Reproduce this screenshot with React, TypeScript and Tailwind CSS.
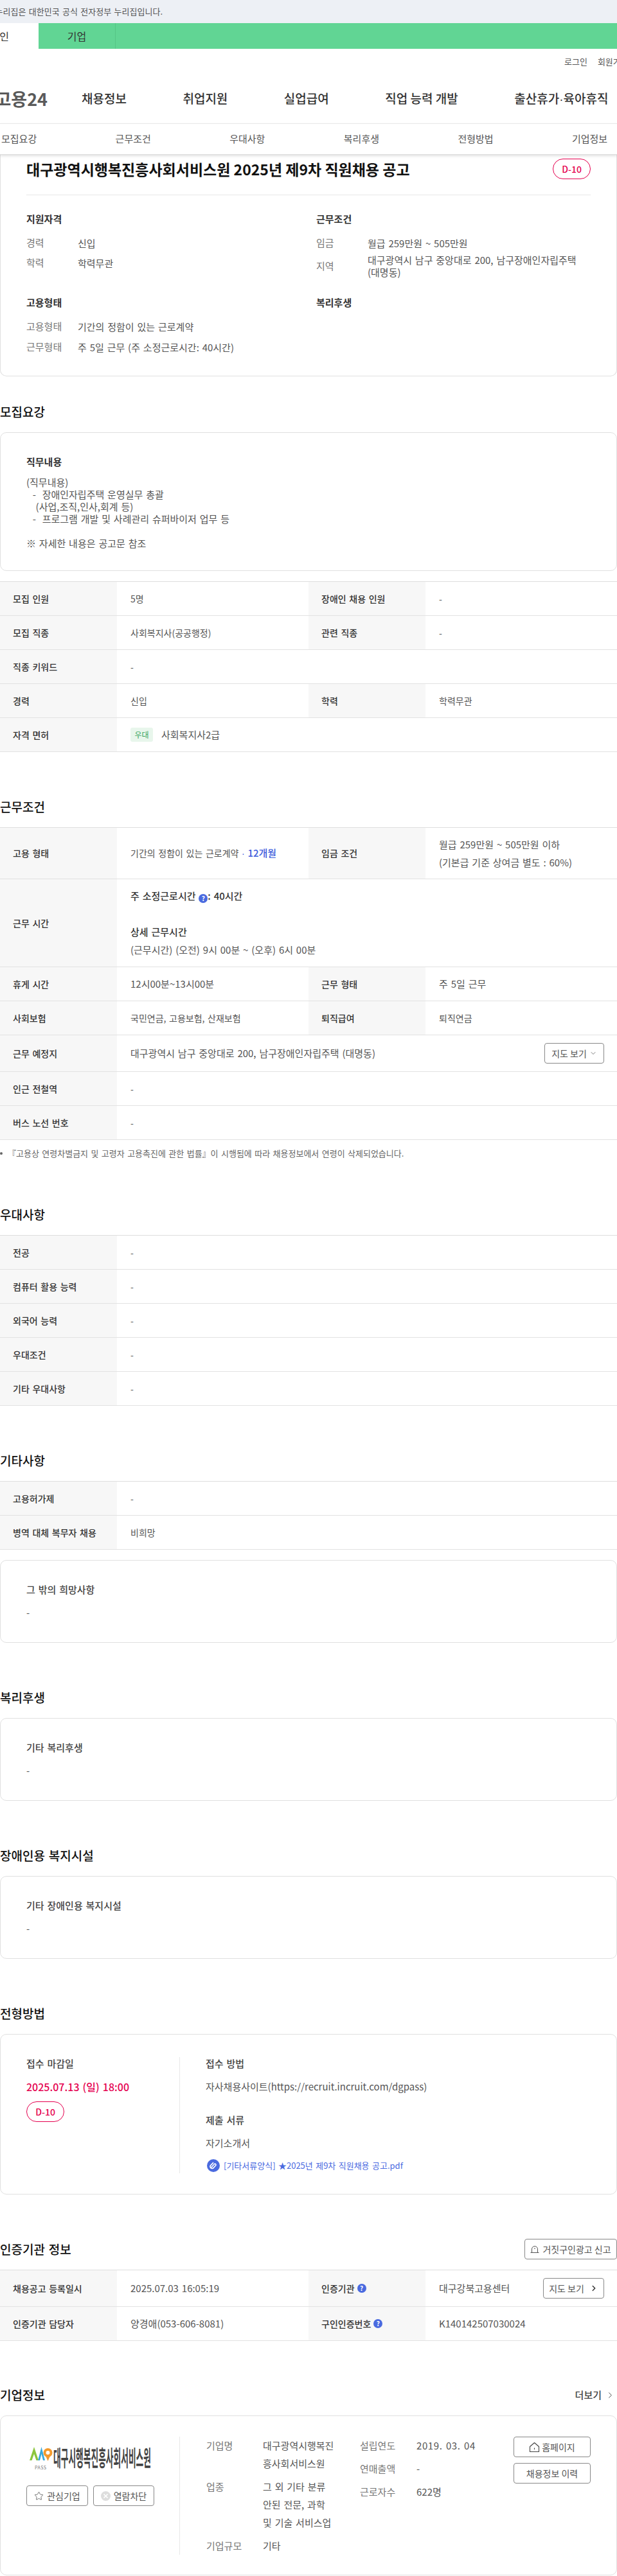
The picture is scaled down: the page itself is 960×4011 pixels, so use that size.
import type { ReactNode } from 'react';
import { ChevronDown, ChevronRight, Star } from 'lucide-react';

function Help() {
  return (
    <span className="inline-flex h-[14px] w-[14px] items-center justify-center rounded-full bg-[#4a6adf] align-[-2px] text-[10px] leading-none font-bold text-white">
      ?
    </span>
  );
}

function DayBadge() {
  return (
    <div className="flex h-[32px] w-[59px] shrink-0 items-center justify-center rounded-full border border-[#e5004f] text-[14px] font-medium text-[#e5004f]">
      D-10
    </div>
  );
}

function SectionTitle({ children, className = 'mt-[71px]' }: { children: ReactNode; className?: string }) {
  return <h2 className={`${className} mb-[18px] h-[28px] text-[19px] leading-[28px] font-medium text-[#111]`}>{children}</h2>;
}

function Cell({ label, children, wide, h }: { label: ReactNode; children: ReactNode; wide?: boolean; h?: string }) {
  return (
    <div className={`flex ${wide ? 'w-[960px]' : 'w-[480px]'} ${h ?? ''}`}>
      <div className="flex w-[182px] shrink-0 items-center bg-[#f7f7f7] pl-5 font-medium text-[#333]">{label}</div>
      <div className="flex min-w-0 flex-1 items-center pl-[21px] text-[#555]">{children}</div>
    </div>
  );
}

function Row({ children, h = 'h-[53px]' }: { children: ReactNode; h?: string }) {
  return <div className={`flex border-b border-[#e2e2e2] text-[14px] ${h}`}>{children}</div>;
}

function Table({ children }: { children: ReactNode }) {
  return <div className="border-t border-[#dedede]">{children}</div>;
}

function Card({ children, className = '' }: { children: ReactNode; className?: string }) {
  return <div className={`rounded-[10px] border border-[#e0e0e0] px-10 ${className}`}>{children}</div>;
}

function SmallCard({ label }: { label: string }) {
  return (
    <Card className="h-[129px] pt-[35px]">
      <div className="text-[15px] leading-[20px] font-medium text-[#444]">{label}</div>
      <div className="mt-[16px] text-[15px] leading-[20px] text-[#555]">-</div>
    </Card>
  );
}

function Info({ label, children, className = '' }: { label: string; children: ReactNode; className?: string }) {
  return (
    <div className={`flex items-center text-[15px] ${className}`}>
      <div className="w-[80px] shrink-0 leading-[20px] text-[#777]">{label}</div>
      <div className="leading-[19px] text-[#555]">{children}</div>
    </div>
  );
}

function CompanyRow({ label, children }: { label: string; children: ReactNode }) {
  return (
    <div className="flex text-[15px] leading-[28px]">
      <div className="w-[88px] shrink-0 text-[#777]">{label}</div>
      <div className="whitespace-pre-line text-[#555]">{children}</div>
    </div>
  );
}

function OutlineButton({ children, className = '' }: { children: ReactNode; className?: string }) {
  return (
    <button className={`flex h-[32px] items-center justify-center rounded-[4px] border border-[#888] text-[14px] text-[#555] ${className}`}>
      {children}
    </button>
  );
}

function Dot() {
  return <span className="font-['Liberation_Sans',sans-serif]">·</span>;
}

function Logo() {
  return (
    <svg width="190" height="42" viewBox="0 0 190 42" className="ml-[5px] block">
      <path d="M0 24 L7 3 L14 24 L10.5 24 L7 14 L3.5 24 Z" fill="#8cc63f" />
      <path d="M13 24 L18.5 3 L24 24 L21 24 L18.5 14 L16 24 Z" fill="#39a9dc" />
      <circle cx="28.5" cy="12" r="5" fill="none" stroke="#f39a2d" strokeWidth="4" />
      <path d="M25 17 L28.5 25 L32 17 Z" fill="#f39a2d" />
      <text x="8" y="38" fontSize="7" fill="#777" textLength="18" lengthAdjust="spacing">PASS</text>
      <text x="37" y="33" fontSize="34" fontWeight="700" fill="#444" textLength="152" lengthAdjust="spacingAndGlyphs">대구시행복진흥사회서비스원</text>
    </svg>
  );
}

export default function App() {
  return (
    <div className="h-[4011px] w-[960px] overflow-hidden bg-white font-['Noto_Sans_CJK_KR','Noto_Sans',sans-serif] text-[#333] [word-spacing:1.5px]">
      {/* 상단 배너 */}
      <div className="flex h-[36px] items-center bg-[#edf0f5]">
        <div className="flex w-[253px] justify-end text-[13px] whitespace-nowrap text-[#555]">이 누리집은 대한민국 공식 전자정부 누리집입니다.</div>
      </div>

      <div className="flex h-[40px] items-center bg-[#61d594] text-[16px] text-[#333]">
        <div className="flex h-full w-[60px] items-center justify-end bg-white pr-[46px] whitespace-nowrap">개인</div>
        <div className="flex h-full w-[120px] items-center justify-center border-r border-[#56c586]">기업</div>
      </div>

      <div className="flex h-[40px] items-center gap-4 pl-[878px] text-[13px] whitespace-nowrap text-[#555]">
        <span>로그인</span>
        <span>회원가입</span>
      </div>

      {/* 메인 메뉴 */}
      <div className="flex h-[76px] items-center whitespace-nowrap">
        <div className="flex w-[74px] shrink-0 justify-end text-[27px] font-bold text-[#5a5a5a]">고용24</div>
        <nav className="ml-[53px] flex gap-[87.5px] text-[19px] font-medium text-[#333] [word-spacing:0]">
          <span>채용정보</span>
          <span>취업지원</span>
          <span>실업급여</span>
          <span>직업 능력 개발</span>
          <span>
            출산휴가
            <Dot />
            육아휴직
          </span>
        </nav>
      </div>

      <div className="relative z-10 flex h-[49px] items-center gap-[122.4px] border-t border-b border-t-[#e8e8e8] border-b-[#ddd] bg-white pl-[2px] text-[15px] text-[#555] shadow-[0_2px_4px_rgba(0,0,0,0.12)]">
        <span>모집요강</span>
        <span>근무조건</span>
        <span>우대사항</span>
        <span>복리후생</span>
        <span>전형방법</span>
        <span>기업정보</span>
      </div>

      {/* 공고 요약 */}
      <div className="h-[345px] rounded-b-[10px] border border-t-0 border-[#e0e0e0] px-10 pt-[6px]">
        <div className="flex h-[57px] items-start justify-between border-b border-[#e8e8e8]">
          <h1 className="text-[23px] leading-[32px] font-semibold text-[#111] [word-spacing:0]">대구광역시행복진흥사회서비스원 2025년 제9차 직원채용 공고</h1>
          <DayBadge />
        </div>
        <div className="mt-[27px] grid grid-cols-[451px_1fr] gap-y-[28px]">
          <div>
            <h3 className="text-[15px] leading-[20px] font-semibold text-[#333]">지원자격</h3>
            <Info label="경력" className="mt-[17px]">신입</Info>
            <Info label="학력" className="mt-[11px]">학력무관</Info>
          </div>
          <div>
            <h3 className="text-[15px] leading-[20px] font-semibold text-[#333]">근무조건</h3>
            <Info label="임금" className="mt-[17px]">월급 259만원 ~ 505만원</Info>
            <Info label="지역" className="mt-[7px]">
              대구광역시 남구 중앙대로 200, 남구장애인자립주택
              <br />
              (대명동)
            </Info>
          </div>
          <div>
            <h3 className="text-[15px] leading-[20px] font-semibold text-[#333]">고용형태</h3>
            <Info label="고용형태" className="mt-[17px]">기간의 정함이 있는 근로계약</Info>
            <Info label="근무형태" className="mt-[12px]">주 5일 근무 (주 소정근로시간: 40시간)</Info>
          </div>
          <div>
            <h3 className="text-[15px] leading-[20px] font-semibold text-[#333]">복리후생</h3>
          </div>
        </div>
      </div>

      {/* 모집요강 */}
      <SectionTitle className="mt-[41px]">모집요강</SectionTitle>
      <Card className="h-[216px] pt-[35px]">
        <div className="text-[15px] leading-[20px] font-semibold text-[#333]">직무내용</div>
        <div className="mt-[12px] text-[15px] leading-[19px] whitespace-pre text-[#555]">
          {'(직무내용)\n  -  장애인자립주택 운영실무 총괄\n   (사업,조직,인사,회계 등)\n  -  프로그램 개발 및 사례관리 슈퍼바이저 업무 등\n\n※ 자세한 내용은 공고문 참조'}
        </div>
      </Card>

      <div className="mt-[16px]">
        <Table>
          <Row>
            <Cell label="모집 인원">5명</Cell>
            <Cell label="장애인 채용 인원">-</Cell>
          </Row>
          <Row>
            <Cell label="모집 직종">사회복지사(공공행정)</Cell>
            <Cell label="관련 직종">-</Cell>
          </Row>
          <Row>
            <Cell label="직종 키워드" wide>-</Cell>
          </Row>
          <Row>
            <Cell label="경력">신입</Cell>
            <Cell label="학력">학력무관</Cell>
          </Row>
          <Row>
            <Cell label="자격 면허" wide>
              <span className="mr-[13px] flex h-[22px] w-[35px] items-center justify-center rounded-[3px] bg-[#e8f6ec] text-[12px] text-[#3aa55f]">우대</span>
              <span className="text-[15px]">사회복지사2급</span>
            </Cell>
          </Row>
        </Table>
      </div>

      {/* 근무조건 */}
      <SectionTitle>근무조건</SectionTitle>
      <Table>
        <Row h="h-[80px]">
          <Cell label="고용 형태">
            <span>
              기간의 정함이 있는 근로계약 <span className="text-[#3b5bdb]"><Dot /> <span className="text-[15px] font-medium">12개월</span></span>
            </span>
          </Cell>
          <Cell label="임금 조건">
            <div className="text-[15px] leading-[28px]">
              월급 259만원 ~ 505만원 이하
              <br />
              (기본급 기준 상여금 별도 : 60%)
            </div>
          </Cell>
        </Row>
        <Row h="h-[137px]">
          <Cell label="근무 시간" wide>
            <div className="text-[15px] leading-[28px]">
              <div className="font-medium text-[#333]">
                주 소정근로시간 <Help />: 40시간
              </div>
              <div className="h-[28px]" />
              <div className="font-medium text-[#333]">상세 근무시간</div>
              <div>(근무시간) (오전) 9시 00분 ~ (오후) 6시 00분</div>
            </div>
          </Cell>
        </Row>
        <Row>
          <Cell label="휴게 시간"><span className="text-[15px]">12시00분~13시00분</span></Cell>
          <Cell label="근무 형태"><span className="text-[15px]">주 5일 근무</span></Cell>
        </Row>
        <Row>
          <Cell label="사회보험">국민연금, 고용보험, 산재보험</Cell>
          <Cell label="퇴직급여">퇴직연금</Cell>
        </Row>
        <Row h="h-[57px]">
          <Cell label="근무 예정지" wide>
            <div className="flex w-full items-center justify-between pr-5">
              <span className="text-[15px]">대구광역시 남구 중앙대로 200, 남구장애인자립주택 (대명동)</span>
              <OutlineButton className="w-[93px] gap-1">
                지도 보기
                <ChevronDown size={12} strokeWidth={1.5} />
              </OutlineButton>
            </div>
          </Cell>
        </Row>
        <Row>
          <Cell label="인근 전철역" wide>-</Cell>
        </Row>
        <Row>
          <Cell label="버스 노선 번호" wide>-</Cell>
        </Row>
      </Table>
      <div className="mt-[11px] flex h-[20px] items-center text-[13px] whitespace-nowrap text-[#666]">
        <span className="h-[4px] w-[4px] rounded-full bg-[#666]" />
        <span className="ml-[8px]">『고용상 연령차별금지 및 고령자 고용촉진에 관한 법률』이 시행됨에 따라 채용정보에서 연령이 삭제되었습니다.</span>
      </div>

      {/* 우대사항 */}
      <SectionTitle>우대사항</SectionTitle>
      <Table>
        <Row><Cell label="전공" wide>-</Cell></Row>
        <Row><Cell label="컴퓨터 활용 능력" wide>-</Cell></Row>
        <Row><Cell label="외국어 능력" wide>-</Cell></Row>
        <Row><Cell label="우대조건" wide>-</Cell></Row>
        <Row><Cell label="기타 우대사항" wide>-</Cell></Row>
      </Table>

      {/* 기타사항 */}
      <SectionTitle>기타사항</SectionTitle>
      <Table>
        <Row><Cell label="고용허가제" wide>-</Cell></Row>
        <Row><Cell label="병역 대체 복무자 채용" wide>비희망</Cell></Row>
      </Table>
      <div className="mt-[16px]">
        <SmallCard label="그 밖의 희망사항" />
      </div>

      <SectionTitle>복리후생</SectionTitle>
      <SmallCard label="기타 복리후생" />

      <SectionTitle>장애인용 복지시설</SectionTitle>
      <SmallCard label="기타 장애인용 복지시설" />

      {/* 전형방법 */}
      <SectionTitle>전형방법</SectionTitle>
      <Card className="flex h-[249.5px] pt-[35px]">
        <div className="h-[181px] w-[239px] shrink-0 border-r border-[#e8e8e8]">
          <div className="text-[15px] leading-[20px] font-medium text-[#444]">접수 마감일</div>
          <div className="mt-[16px] text-[16px] leading-[20px] font-medium text-[#e5004f]">2025.07.13 (일) 18:00</div>
          <div className="mt-[13px]">
            <DayBadge />
          </div>
        </div>
        <div className="pl-[40px]">
          <div className="text-[15px] leading-[20px] font-medium text-[#444]">접수 방법</div>
          <div className="mt-[16px] text-[15px] leading-[20px] text-[#555]">자사채용사이트(https://recruit.incruit.com/dgpass)</div>
          <div className="mt-[32px] text-[15px] leading-[20px] font-medium text-[#444]">제출 서류</div>
          <div className="mt-[16px] text-[15px] leading-[20px] text-[#555]">자기소개서</div>
          <div className="mt-[15px] flex h-[20px] items-center text-[13px] text-[#4a6adf]">
            <svg width="20" height="20" viewBox="0 0 20 20" className="mr-[6px] ml-[2px]">
              <circle cx="10" cy="10" r="10" fill="#4a6adf" />
              <path d="M7 12.5 L11.5 7.5 A1.6 1.6 0 0 1 13.8 9.6 L9.6 14 A3 3 0 0 1 5.4 10 L9.6 5.6" fill="none" stroke="#fff" strokeWidth="1.6" strokeLinecap="round" />
            </svg>
            [기타서류양식] ★2025년 제9차 직원채용 공고.pdf
          </div>
        </div>
      </Card>

      {/* 인증기관 정보 */}
      <div className="mt-[69.5px] mb-[16px] flex h-[32px] items-center justify-between">
        <h2 className="text-[19px] font-medium text-[#111]">인증기관 정보</h2>
        <OutlineButton className="w-[144px] gap-[5px]">
          <svg width="14" height="14" viewBox="0 0 14 14" fill="none" stroke="#555" strokeWidth="1">
            <path d="M2.5 12.5 V7 A4.5 4.5 0 0 1 11.5 7 V12.5 M0.5 12.5 H13.5 M7 5 V7" />
          </svg>
          거짓구인광고 신고
        </OutlineButton>
      </div>
      <Table>
        <Row h="h-[57px]">
          <Cell label="채용공고 등록일시"><span className="text-[15px]">2025.07.03 16:05:19</span></Cell>
          <Cell label={<span className="flex items-center gap-1">인증기관 <Help /></span>}>
            <div className="flex w-full items-center justify-between pr-5">
              <span className="text-[15px]">대구강북고용센터</span>
              <OutlineButton className="w-[95px] gap-2">
                지도 보기
                <ChevronRight size={14} strokeWidth={2.5} className="text-[#333]" />
              </OutlineButton>
            </div>
          </Cell>
        </Row>
        <Row>
          <Cell label="인증기관 담당자"><span className="text-[15px]">양경애(053-606-8081)</span></Cell>
          <Cell label={<span className="flex items-center gap-1">구인인증번호 <Help /></span>}><span className="text-[15px]">K140142507030024</span></Cell>
        </Row>
      </Table>

      {/* 기업정보 */}
      <div className="mt-[70px] mb-[18px] flex h-[28px] items-center justify-between">
        <h2 className="text-[19px] font-medium text-[#111]">기업정보</h2>
        <div className="flex items-center gap-[6px] pr-[3px] text-[15px] font-medium text-[#444]">
          더보기
          <ChevronRight size={15} strokeWidth={1.5} />
        </div>
      </div>
      <Card className="flex h-[249px] pt-[32px]">
        <div className="h-[184px] w-[239px] shrink-0 border-r border-[#e8e8e8] pt-[13px]">
          <Logo />
          <div className="mt-[21px] flex gap-2 text-[#555]">
            <OutlineButton className="w-[96px] gap-[5px]">
              <Star size={15} strokeWidth={1.3} />
              관심기업
            </OutlineButton>
            <OutlineButton className="w-[95px] gap-[5px]">
              <svg width="15" height="15" viewBox="0 0 15 15">
                <circle cx="7.5" cy="7.5" r="7.5" fill="#ddd" />
                <path d="M4.5 4.5 L10.5 10.5 M10.5 4.5 L4.5 10.5" stroke="#fff" strokeWidth="1.6" />
              </svg>
              열람차단
            </OutlineButton>
          </div>
        </div>
        <div className="flex w-[280px] shrink-0 flex-col gap-2 pl-[41px]">
          <CompanyRow label="기업명">{'대구광역시행복진\n흥사회서비스원'}</CompanyRow>
          <CompanyRow label="업종">{'그 외 기타 분류\n안된 전문, 과학\n및 기술 서비스업'}</CompanyRow>
          <CompanyRow label="기업규모">기타</CompanyRow>
        </div>
        <div className="flex w-[239px] shrink-0 flex-col gap-2">
          <CompanyRow label="설립연도"><span className="tracking-[0.04em]">2019. 03. 04</span></CompanyRow>
          <CompanyRow label="연매출액">-</CompanyRow>
          <CompanyRow label="근로자수">622명</CompanyRow>
        </div>
        <div className="flex w-[120px] shrink-0 flex-col gap-[9px]">
          <OutlineButton className="w-[120px] gap-[3px]">
            <svg width="17" height="17" viewBox="0 0 17 17" fill="none" stroke="#444" strokeWidth="1.1">
              <path d="M1.5 7.5 L8.5 1.5 L15.5 7.5 V15.5 H1.5 Z" strokeLinejoin="round" />
              <path d="M8.5 9.5 V12" />
            </svg>
            홈페이지
          </OutlineButton>
          <OutlineButton className="w-[120px]">채용정보 이력</OutlineButton>
        </div>
      </Card>
    </div>
  );
}
